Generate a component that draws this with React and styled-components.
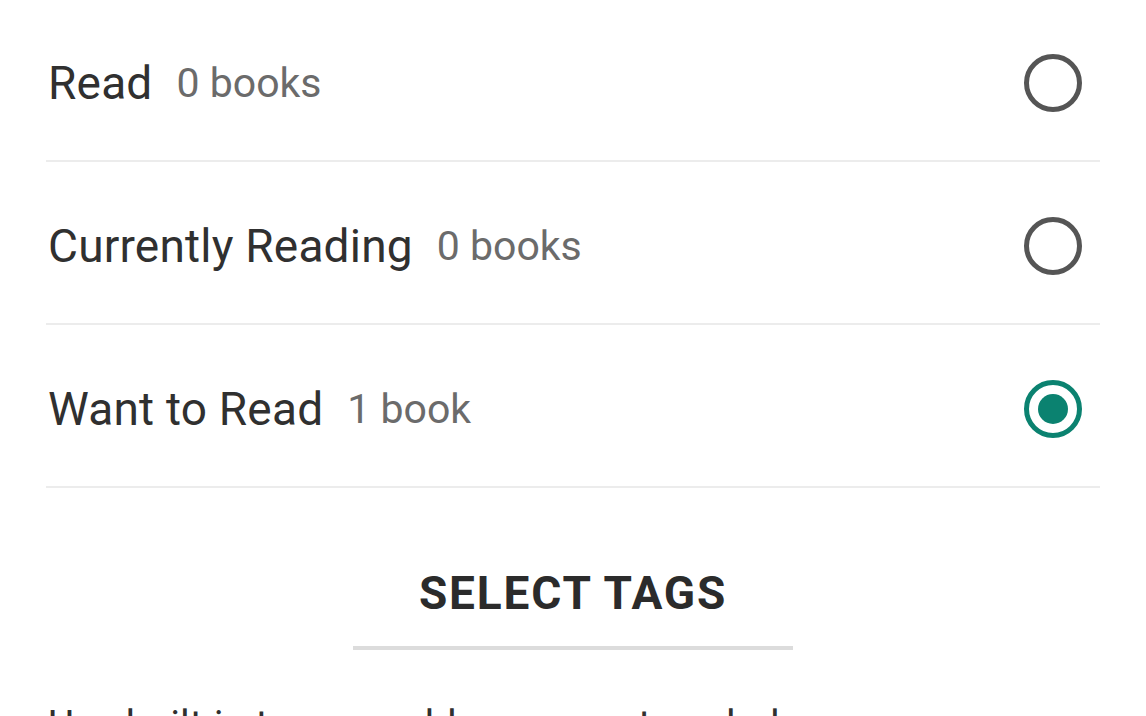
import React, { useState } from 'react';
import styled, { createGlobalStyle } from 'styled-components';

const GlobalStyle = createGlobalStyle`
  html, body {
    margin: 0;
    padding: 0;
    background: #ffffff;
    overflow: hidden;
  }
  body {
    font-family: Roboto, "Noto Sans", "Liberation Sans", sans-serif;
  }
`;

const Sheet = styled.div`
  width: 1146px;
  height: 716px;
  overflow: hidden;
  background: #fff;
`;

const ShelfList = styled.ul`
  list-style: none;
  margin: -1px 46px 0 46px;
  padding: 0;
`;

const ShelfRow = styled.li`
  display: flex;
  align-items: center;
  height: 155px;
  padding: 6px 18px 0 2px;
  border-bottom: 2px solid #ececec;
  cursor: pointer;
`;

const ShelfName = styled.span`
  font-size: 46px;
  color: #303030;
  letter-spacing: 0.2px;
`;

const ShelfCount = styled.span`
  margin-left: 24px;
  font-size: 41px;
  color: #6b6b6b;
  flex: 1;
`;

const Radio = styled.span`
  width: 48px;
  height: 48px;
  border-radius: 50%;
  border: 5px solid ${p => (p.checked ? '#0b8270' : '#555')};
  display: flex;
  align-items: center;
  justify-content: center;

  &::after {
    content: '';
    width: 30px;
    height: 30px;
    border-radius: 50%;
    background: #0b8270;
    display: ${p => (p.checked ? 'block' : 'none')};
  }
`;

const TagsButton = styled.button`
  display: block;
  margin: 82px auto 0;
  width: 440px;
  padding: 0 0 30px;
  background: none;
  border: none;
  border-bottom: 4px solid #dcdcdc;
  font-family: Roboto, "Noto Sans", "Liberation Sans", sans-serif;
  font-weight: 700;
  font-size: 46px;
  letter-spacing: 1.8px;
  color: #2b2b2b;
  line-height: 1;
  cursor: pointer;
`;

const Hint = styled.p`
  margin: 52px 48px 0;
  font-size: 40px;
  color: #303030;
  white-space: nowrap;
`;

const shelves = [
  { name: 'Read', count: '0 books' },
  { name: 'Currently Reading', count: '0 books' },
  { name: 'Want to Read', count: '1 book' },
];

export default function App() {
  const [selected, setSelected] = useState(2);

  return (
    <Sheet>
      <GlobalStyle />
      <ShelfList>
        {shelves.map((s, i) => (
          <ShelfRow key={s.name} onClick={() => setSelected(i)}>
            <ShelfName>{s.name}</ShelfName>
            <ShelfCount>{s.count}</ShelfCount>
            <Radio checked={selected === i} />
          </ShelfRow>
        ))}
      </ShelfList>
      <TagsButton>SELECT TAGS</TagsButton>
      <Hint>Use built-in tags or add your own tags below.</Hint>
    </Sheet>
  );
}
